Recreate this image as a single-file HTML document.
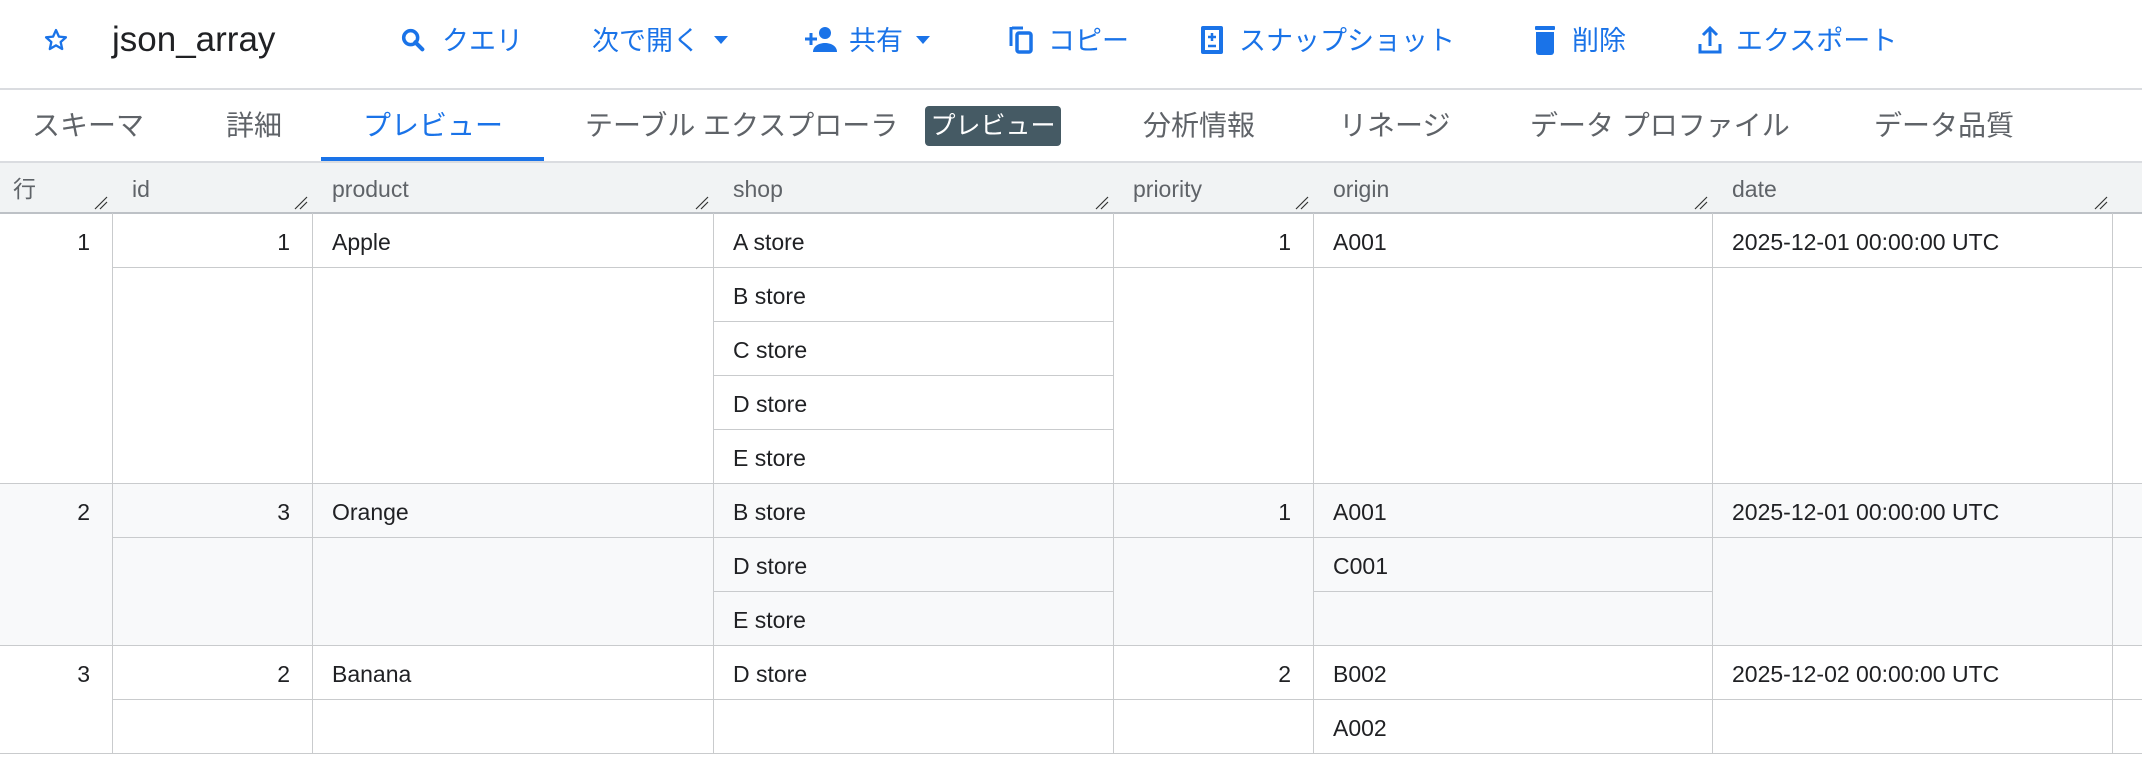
<!DOCTYPE html>
<html><head><meta charset="utf-8"><style>
*{margin:0;padding:0;box-sizing:border-box}
body{width:2142px;height:782px;background:#fff;position:relative;overflow:hidden;font-family:"Liberation Sans","Noto Sans CJK JP",sans-serif;}
.a{position:absolute;white-space:nowrap}
.tb{color:#1a73e8;font-size:27px;top:22px;line-height:38px}
.tab{color:#5f6368;font-size:28px;top:105px;line-height:42px}
.h{position:absolute;background:#c9cbcd;height:1px}
.v{position:absolute;background:#c9cbcd;width:1px;top:213px;height:541px}
.hd{color:#5f6368;font-size:23px;top:175px;line-height:28px}
.c{color:#202124;font-size:23px;line-height:54px;height:54px;padding-top:2px}
.r{text-align:right}
.rz{position:absolute;top:196px;width:14px;height:14px}
</style></head><body>
<!-- toolbar -->
<svg class="a" style="left:42px;top:26px" width="28" height="28" viewBox="0 0 24 24"><path d="M12 3.5l2.5 5.6 6 .6-4.5 4 1.3 6-5.3-3.1-5.3 3.1 1.3-6-4.5-4 6-.6z" fill="none" stroke="#1a73e8" stroke-width="2" stroke-linejoin="round"/></svg>
<div class="a" style="left:112px;top:17px;font-size:35px;color:#202124;line-height:46px">json_array</div>
<svg class="a" style="left:399px;top:26px" width="28" height="28" viewBox="0 0 24 24"><circle cx="10" cy="10" r="6" fill="none" stroke="#1a73e8" stroke-width="3"/><path d="M14 14l6 6" stroke="#1a73e8" stroke-width="3.5" stroke-linecap="round"/></svg>
<div class="a tb" style="left:442px">クエリ</div>
<div class="a tb" style="left:592px">次で開く</div>
<svg class="a" style="left:712px;top:34px" width="18" height="12" viewBox="0 0 18 12"><path d="M2 2h14l-7 8z" fill="#1a73e8"/></svg>
<svg class="a" style="left:803px;top:24px" width="36" height="32" viewBox="0 0 36 32"><circle cx="22" cy="9" r="6" fill="#1a73e8"/><path d="M10 28c0-6 6-9 12-9s12 3 12 9z" fill="#1a73e8"/><path d="M2 15h12M8 9v12" stroke="#1a73e8" stroke-width="3"/></svg>
<div class="a tb" style="left:849px">共有</div>
<svg class="a" style="left:914px;top:34px" width="18" height="12" viewBox="0 0 18 12"><path d="M2 2h14l-7 8z" fill="#1a73e8"/></svg>
<svg class="a" style="left:1008px;top:24px" width="28" height="32" viewBox="0 0 28 32"><path d="M4 4h11" stroke="#1a73e8" stroke-width="3"/><path d="M3 3v19" stroke="#1a73e8" stroke-width="3"/><rect x="9" y="9" width="14" height="19" rx="2" fill="none" stroke="#1a73e8" stroke-width="3.5"/></svg>
<div class="a tb" style="left:1048px">コピー</div>
<svg class="a" style="left:1199px;top:24px" width="26" height="32" viewBox="0 0 26 32"><rect x="2" y="2" width="22" height="28" rx="2" fill="#1a73e8"/><rect x="6" y="6" width="14" height="20" fill="#fff"/><path d="M13 9v8M9 13h8M9 22h8" stroke="#1a73e8" stroke-width="2.5"/></svg>
<div class="a tb" style="left:1239px">スナップショット</div>
<svg class="a" style="left:1532px;top:24px" width="26" height="32" viewBox="0 0 26 32"><rect x="3" y="2" width="20" height="4" rx="1" fill="#1a73e8"/><path d="M4 8h18v20a3 3 0 0 1-3 3H7a3 3 0 0 1-3-3z" fill="#1a73e8"/></svg>
<div class="a tb" style="left:1572px">削除</div>
<svg class="a" style="left:1696px;top:24px" width="28" height="32" viewBox="0 0 28 32"><path d="M14 22V5M7 11l7-7 7 7" fill="none" stroke="#1a73e8" stroke-width="3"/><path d="M4 20v8h20v-8" fill="none" stroke="#1a73e8" stroke-width="3"/></svg>
<div class="a tb" style="left:1736px">エクスポート</div>
<div class="a" style="left:0;top:88px;width:2142px;height:2px;background:#dadce0"></div>
<!-- tabs -->
<div class="a tab" style="left:32px">スキーマ</div>
<div class="a tab" style="left:226px">詳細</div>
<div class="a tab" style="left:363px;color:#1a73e8">プレビュー</div>
<div class="a" style="left:321px;top:157px;width:223px;height:4px;background:#1a73e8"></div>
<div class="a tab" style="left:585px">テーブル エクスプローラ</div>
<div class="a" style="left:925px;top:106px;width:136px;height:40px;background:#455a64;border-radius:4px;color:#fff;font-size:25px;line-height:40px;text-align:center">プレビュー</div>
<div class="a tab" style="left:1143px">分析情報</div>
<div class="a tab" style="left:1339px">リネージ</div>
<div class="a tab" style="left:1530px">データ プロファイル</div>
<div class="a tab" style="left:1874px">データ品質</div>
<!-- header -->
<div class="a" style="left:0;top:161px;width:2142px;height:2px;background:#dadce0"></div>
<div class="a" style="left:0;top:163px;width:2142px;height:50px;background:#f1f3f4"></div>
<div class="a" style="left:0;top:483px;width:2142px;height:162px;background:#f8f9fa"></div>
<div class="a hd" style="left:13px">行</div>
<div class="a hd" style="left:132px">id</div>
<div class="a hd" style="left:332px">product</div>
<div class="a hd" style="left:733px">shop</div>
<div class="a hd" style="left:1133px">priority</div>
<div class="a hd" style="left:1333px">origin</div>
<div class="a hd" style="left:1732px">date</div>
<svg class="rz" style="left:94px" viewBox="0 0 14 14"><path d="M1 13L13 1M6 13L13 6" stroke="#333" stroke-width="1.2"/></svg>
<svg class="rz" style="left:294px" viewBox="0 0 14 14"><path d="M1 13L13 1M6 13L13 6" stroke="#333" stroke-width="1.2"/></svg>
<svg class="rz" style="left:695px" viewBox="0 0 14 14"><path d="M1 13L13 1M6 13L13 6" stroke="#333" stroke-width="1.2"/></svg>
<svg class="rz" style="left:1095px" viewBox="0 0 14 14"><path d="M1 13L13 1M6 13L13 6" stroke="#333" stroke-width="1.2"/></svg>
<svg class="rz" style="left:1295px" viewBox="0 0 14 14"><path d="M1 13L13 1M6 13L13 6" stroke="#333" stroke-width="1.2"/></svg>
<svg class="rz" style="left:1694px" viewBox="0 0 14 14"><path d="M1 13L13 1M6 13L13 6" stroke="#333" stroke-width="1.2"/></svg>
<svg class="rz" style="left:2094px" viewBox="0 0 14 14"><path d="M1 13L13 1M6 13L13 6" stroke="#333" stroke-width="1.2"/></svg>
<!-- grid lines -->
<div class="h" style="left:0;top:212px;width:2142px;height:2px;background:#bdc1c6"></div>
<div class="h" style="left:112px;top:267px;width:2030px"></div>
<div class="h" style="left:713px;top:321px;width:400px"></div>
<div class="h" style="left:713px;top:375px;width:400px"></div>
<div class="h" style="left:713px;top:429px;width:400px"></div>
<div class="h" style="left:0;top:483px;width:2142px"></div>
<div class="h" style="left:112px;top:537px;width:2030px"></div>
<div class="h" style="left:713px;top:591px;width:400px"></div>
<div class="h" style="left:1313px;top:591px;width:399px"></div>
<div class="h" style="left:0;top:645px;width:2142px"></div>
<div class="h" style="left:112px;top:699px;width:2030px"></div>
<div class="h" style="left:0;top:753px;width:2142px"></div>
<div class="v" style="left:112px"></div>
<div class="v" style="left:312px"></div>
<div class="v" style="left:713px"></div>
<div class="v" style="left:1113px"></div>
<div class="v" style="left:1313px"></div>
<div class="v" style="left:1712px"></div>
<div class="v" style="left:2112px"></div>
<!-- cells group 1 -->
<div class="a c r" style="left:0;width:90px;top:213px">1</div>
<div class="a c r" style="left:112px;width:178px;top:213px">1</div>
<div class="a c" style="left:332px;top:213px">Apple</div>
<div class="a c" style="left:733px;top:213px">A store</div>
<div class="a c" style="left:733px;top:267px">B store</div>
<div class="a c" style="left:733px;top:321px">C store</div>
<div class="a c" style="left:733px;top:375px">D store</div>
<div class="a c" style="left:733px;top:429px">E store</div>
<div class="a c r" style="left:1113px;width:178px;top:213px">1</div>
<div class="a c" style="left:1333px;top:213px">A001</div>
<div class="a c" style="left:1732px;top:213px">2025-12-01 00:00:00 UTC</div>
<!-- group 2 -->
<div class="a c r" style="left:0;width:90px;top:483px">2</div>
<div class="a c r" style="left:112px;width:178px;top:483px">3</div>
<div class="a c" style="left:332px;top:483px">Orange</div>
<div class="a c" style="left:733px;top:483px">B store</div>
<div class="a c" style="left:733px;top:537px">D store</div>
<div class="a c" style="left:733px;top:591px">E store</div>
<div class="a c r" style="left:1113px;width:178px;top:483px">1</div>
<div class="a c" style="left:1333px;top:483px">A001</div>
<div class="a c" style="left:1333px;top:537px">C001</div>
<div class="a c" style="left:1732px;top:483px">2025-12-01 00:00:00 UTC</div>
<!-- group 3 -->
<div class="a c r" style="left:0;width:90px;top:645px">3</div>
<div class="a c r" style="left:112px;width:178px;top:645px">2</div>
<div class="a c" style="left:332px;top:645px">Banana</div>
<div class="a c" style="left:733px;top:645px">D store</div>
<div class="a c r" style="left:1113px;width:178px;top:645px">2</div>
<div class="a c" style="left:1333px;top:645px">B002</div>
<div class="a c" style="left:1333px;top:699px">A002</div>
<div class="a c" style="left:1732px;top:645px">2025-12-02 00:00:00 UTC</div>
</body></html>
